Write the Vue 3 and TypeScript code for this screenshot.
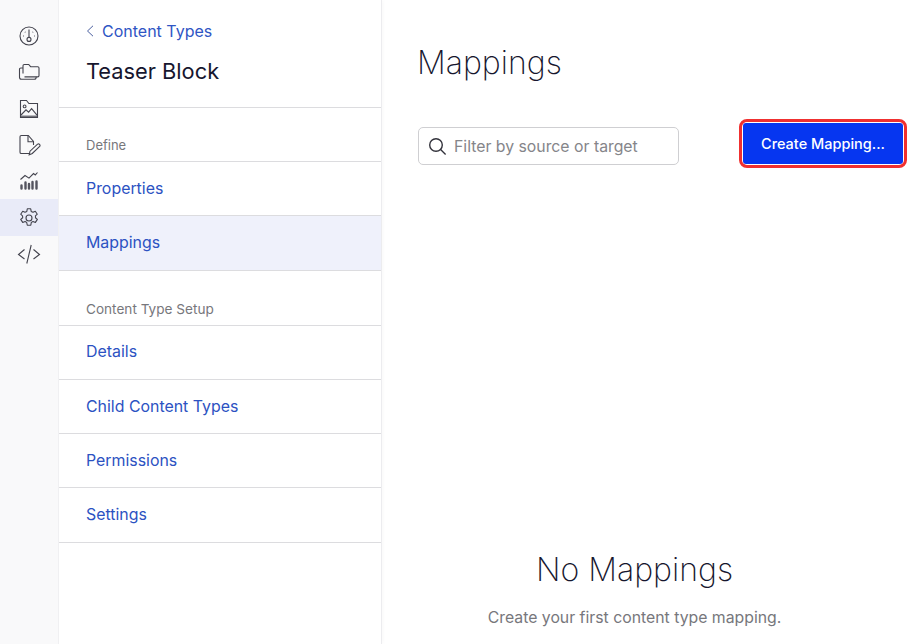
<script setup lang="ts">
const defineLinks = ['Properties', 'Mappings']
const setupLinks = ['Details', 'Child Content Types', 'Permissions', 'Settings']
</script>

<template>
  <div class="page">
    <!-- icon rail -->
    <nav class="rail">
      <div class="rail-item">
        <svg width="22" height="22" viewBox="0 0 22 22" fill="none">
          <circle cx="11" cy="11" r="9" />
          <path d="M11 4.5v7.6" />
          <circle cx="11" cy="14.4" r="2" />
          <path d="M5.2 11h.8M16 11h.8M6.9 6.9l.5.5M15.1 6.9l-.5.5" />
        </svg>
      </div>
      <div class="rail-item">
        <svg width="24" height="22" viewBox="0 0 24 22" fill="none">
          <path d="M6 12.5V4.8a1.3 1.3 0 0 1 1.3-1.3h4.4l1.9 2.2h7.1a1.3 1.3 0 0 1 1.3 1.3v7.6a1.3 1.3 0 0 1-1.3 1.3H7.5" />
          <path d="M6 7H3.8a1.3 1.3 0 0 0-1.3 1.3v8a2 2 0 0 0 2 2h12.7a2 2 0 0 0 2-2v-.6" />
        </svg>
      </div>
      <div class="rail-item">
        <svg width="22" height="22" viewBox="0 0 22 22" fill="none">
          <path d="M2.5 2.5h6l2.4 3h8.6v14h-17z" />
          <circle cx="6.6" cy="8.4" r="1.4" />
          <path d="M3 17l5-5.2 2.6 2.4 3-3.6 5.4 6.6" />
          <path d="M3 18.2h16" />
        </svg>
      </div>
      <div class="rail-item">
        <svg width="24" height="22" viewBox="0 0 24 22" fill="none">
          <path d="M12 19.5H4.3A1.3 1.3 0 0 1 3 18.2V2.8a1.3 1.3 0 0 1 1.3-1.3h7l5.2 6V11" />
          <path d="M11 1.5v6.3h5.5" />
          <path d="M12.2 20.8l.8-3.6 7.6-7a1.2 1.2 0 0 1 1.7 0l.4.4a1.2 1.2 0 0 1 0 1.7l-7.4 7.2z" />
        </svg>
      </div>
      <div class="rail-item">
        <svg width="22" height="22" viewBox="0 0 22 22" fill="none">
          <path d="M2.5 9.5l4.5-4 4 2.6 4.5-4.6 1.8 1.4 2.2-2.4" />
          <path class="bars" d="M3.5 15.5v3M7.5 12.5v6M11 14v4.5M14.5 12v6.5M18.5 11.5v7" />
        </svg>
      </div>
      <div class="rail-item active">
        <svg width="22" height="22" viewBox="0 0 22 22" fill="none">
          <path d="M9.3 1.8h3.4l.5 2.6 1.8.9 2.3-1.1 2 3-1.9 1.6.2 2-.2 0 2 1.6-2 3-2.4-1-1.7 1.1-.5 2.7H9.3l-.6-2.7-1.6-1.1-2.4 1-2-3 2-1.6-.2-2-1.8-1.6 2-3 2.3 1.1 1.8-.9z" stroke-linejoin="round" />
          <circle cx="11" cy="11" r="3" />
        </svg>
      </div>
      <div class="rail-item">
        <svg width="24" height="22" viewBox="0 0 24 22" fill="none">
          <path d="M7.5 6.5L1.5 11.5l6 4.5M16.5 6.5l6 5-6 4.5M14.2 2l-4.4 18.5" />
        </svg>
      </div>
    </nav>

    <!-- secondary sidebar -->
    <aside class="side">
      <header class="side-head">
        <a class="back">
          <svg width="8" height="12" viewBox="0 0 8 12" fill="none"><path d="M7 .8L1.5 6 7 11.2" /></svg>
          Content Types
        </a>
        <h2>Teaser Block</h2>
      </header>

      <div class="group-label first">Define</div>
      <ul>
        <li v-for="link in defineLinks" :key="link" :class="{ current: link === 'Mappings' }">{{ link }}</li>
      </ul>

      <div class="group-label">Content Type Setup</div>
      <ul>
        <li v-for="link in setupLinks" :key="link">{{ link }}</li>
      </ul>
    </aside>

    <!-- main -->
    <main class="main">
      <h1>Mappings</h1>
      <div class="toolbar">
        <div class="filter">
          <svg width="19" height="19" viewBox="0 0 19 19" fill="none">
            <circle cx="8" cy="8" r="6.3" />
            <path d="M12.6 12.6l5 5" />
          </svg>
          <span>Filter by source or target</span>
        </div>
        <div class="btn-ring">
          <button>Create Mapping...</button>
        </div>
      </div>
      <div class="empty">
        <h3>No Mappings</h3>
        <p>Create your first content type mapping.</p>
      </div>
    </main>
  </div>
</template>

<style>
html, body { margin: 0; background: #fff; }
</style>

<style scoped>
.page {
  display: flex;
  width: 921px;
  height: 644px;
  overflow: hidden;
  font-family: Inter, "Liberation Sans", sans-serif;
  background: #fff;
}

.rail {
  width: 59px;
  flex: none;
  box-sizing: border-box;
  padding-top: 18px;
  background: #f9f9fa;
  border-right: 1px solid #f0f0f2;
}

.rail-item {
  height: 36.3px;
  display: flex;
  align-items: center;
  justify-content: center;
  padding-right: 1px;
}

.rail-item.active {
  background: #e9ebf8;
}

.rail-item svg * {
  stroke: #44444e;
  stroke-width: 1.1;
}

.rail-item svg .bars {
  stroke-width: 2.4;
  stroke-linecap: round;
  stroke: #55555f;
}

.side {
  width: 323px;
  flex: none;
  box-sizing: border-box;
  border-right: 1px solid #ececef;
  box-shadow: 2px 0 3px rgba(0, 0, 0, 0.02);
}

.side-head {
  height: 108px;
  box-sizing: border-box;
  padding: 21px 27px 0;
  border-bottom: 1px solid #dcdcdf;
}

.back {
  display: flex;
  align-items: center;
  gap: 8px;
  font-size: 16px;
  line-height: 20px;
  color: #2f55c4;
}

.back svg path {
  stroke: #4a5f9f;
  stroke-width: 1;
}

.side-head h2 {
  margin: 15px 0 0;
  font-size: 21.8px;
  line-height: 30px;
  font-weight: 400;
  color: #16162e;
}

.group-label {
  box-sizing: border-box;
  padding: 0 27px;
  font-size: 13px;
  line-height: 16px;
  color: #77777c;
}

.group-label.first {
  height: 53px;
  padding-top: 29px;
}

.side ul {
  list-style: none;
  margin: 0;
  padding: 0;
  border-top: 1px solid #dcdcdf;
}

.side ul + .group-label {
  height: 54px;
  padding-top: 30px;
  font-size: 13.6px;
}

.side li {
  height: 54.3px;
  box-sizing: border-box;
  padding: 0 0 1px 27px;
  display: flex;
  align-items: center;
  border-bottom: 1px solid #dcdcdf;
  font-size: 15.9px;
  color: #2c52c2;
}

.side li.current {
  background: #eff1fb;
}

.main {
  flex: 1;
  min-width: 0;
  padding: 0 14px 0 36px;
  display: flex;
  flex-direction: column;
}

.main h1 {
  margin: 42px 0 0 -1px;
  font-size: 32px;
  line-height: 42px;
  font-weight: 200;
  color: #16162e;
}

.toolbar {
  margin-top: 35px;
  display: flex;
  align-items: flex-start;
  justify-content: space-between;
}

.filter {
  width: 261px;
  height: 38px;
  margin-top: 8px;
  box-sizing: border-box;
  display: flex;
  align-items: center;
  gap: 7px;
  padding-left: 9px;
  border: 1px solid #cfcfd2;
  border-radius: 5px;
  font-size: 15.8px;
  color: #85858a;
}

.filter svg * {
  stroke: #33333c;
  stroke-width: 1.4;
}

.btn-ring {
  border: 3px solid #f03030;
  border-radius: 8px;
  padding: 1px;
}

.btn-ring button {
  display: block;
  width: 160px;
  height: 41px;
  border: 0;
  border-radius: 3px;
  background: #0636f0;
  color: #fff;
  font: 500 14.5px Inter, "Liberation Sans", sans-serif;
}

.empty {
  margin-top: auto;
  padding: 0 56px 16px 0;
  text-align: center;
}

.empty h3 {
  margin: 0;
  font-size: 32px;
  line-height: 42px;
  font-weight: 200;
  color: #16162e;
}

.empty p {
  margin: 17px 0 0;
  font-size: 15.8px;
  line-height: 20px;
  color: #77777c;
}
</style>
